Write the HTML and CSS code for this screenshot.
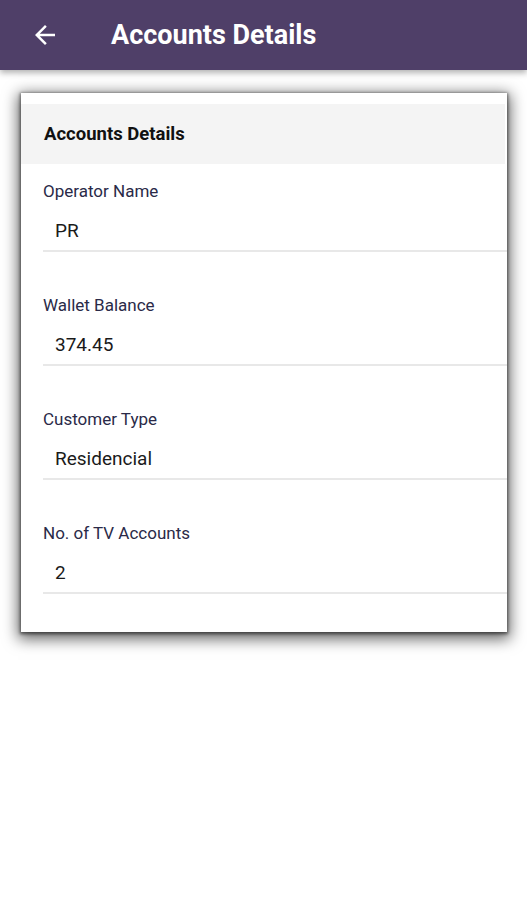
FILE: index.html
```html
<!DOCTYPE html>
<html>
<head>
<meta charset="utf-8">
<link rel="stylesheet" href="styles.css">
</head>
<body>
<header class="appbar">
  <svg class="back" viewBox="0 0 24 24"><path d="M20 11H7.83l5.59-5.59L12 4l-8 8 8 8 1.41-1.41L7.83 13H20v-2z" fill="#fff"/></svg>
  <h1 class="title">Accounts Details</h1>
</header>
<main class="content">
  <section class="card">
    <div class="card-head">Accounts Details</div>
    <div class="field">
      <div class="label">Operator Name</div>
      <div class="value">PR</div>
    </div>
    <div class="field">
      <div class="label">Wallet Balance</div>
      <div class="value">374.45</div>
    </div>
    <div class="field">
      <div class="label">Customer Type</div>
      <div class="value">Residencial</div>
    </div>
    <div class="field">
      <div class="label">No. of TV Accounts</div>
      <div class="value">2</div>
    </div>
  </section>
</main>
</body>
</html>
```
FILE: styles.css
```css
* { box-sizing: border-box; }
html, body { margin: 0; padding: 0; background: #fff; font-family: Roboto, "Liberation Sans", sans-serif; }
body { min-height: 900px; }
.appbar {
  height: 70px;
  background: #4f3f68;
  display: flex;
  align-items: center;
  padding-left: 30px;
  box-shadow: 0 3px 6px rgba(0,0,0,0.3);
  position: relative;
  z-index: 1;
}
.back { width: 30px; height: 30px; }
.title {
  margin: 0 0 0 51px;
  color: #fff;
  font-size: 27px;
  font-weight: 700;
  line-height: 32px;
}
.content { padding: 23px 20px 60px 21px; }
.card {
  background: #fff;
  box-shadow: 0 4px 14px 3px rgba(0,0,0,0.6), 0 1px 3px 1px rgba(0,0,0,0.5);
  padding: 11px 0 38px 0;
}
.card-head {
  background: #f4f4f4;
  height: 60px;
  display: flex;
  align-items: center;
  padding-left: 23px;
  margin-right: 2px;
  font-size: 18.5px;
  font-weight: 700;
  color: #111;
}
.field {
  margin-left: 22px;
  border-bottom: 2px solid #e8e8e8;
  height: 88px;
  padding-top: 17px;
}
.field + .field { margin-top: 26px; }
.label {
  font-size: 17px;
  color: #2a2a48;
  line-height: 20px;
}
.value {
  margin-top: 20px;
  padding-left: 12px;
  font-size: 19px;
  color: #1a1a1a;
  line-height: 20px;
}
```
